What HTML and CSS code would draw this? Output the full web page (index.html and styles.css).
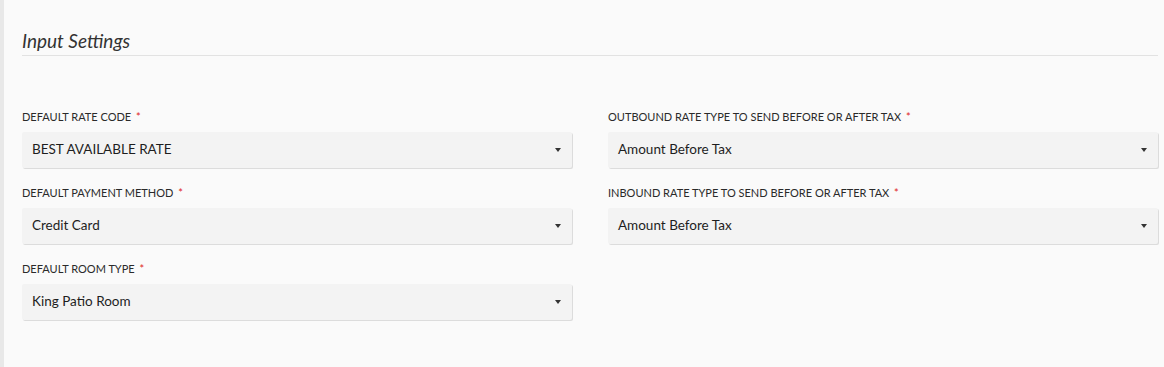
FILE: index.html
```html
<!DOCTYPE html>
<html>
<head>
<meta charset="utf-8">
<link rel="stylesheet" href="styles.css">
</head>
<body>
<div class="page">
  <div class="strip"></div>
  <main class="content">
    <h2 class="section-title">Input Settings</h2>
    <div class="form-grid">
      <div class="col">
        <div class="field">
          <label class="label">DEFAULT RATE CODE <span class="req">*</span></label>
          <div class="select"><span>BEST AVAILABLE RATE</span><i class="caret"></i></div>
        </div>
        <div class="field">
          <label class="label">DEFAULT PAYMENT METHOD <span class="req">*</span></label>
          <div class="select"><span>Credit Card</span><i class="caret"></i></div>
        </div>
        <div class="field">
          <label class="label">DEFAULT ROOM TYPE <span class="req">*</span></label>
          <div class="select"><span>King Patio Room</span><i class="caret"></i></div>
        </div>
      </div>
      <div class="col">
        <div class="field">
          <label class="label">OUTBOUND RATE TYPE TO SEND BEFORE OR AFTER TAX <span class="req">*</span></label>
          <div class="select"><span>Amount Before Tax</span><i class="caret"></i></div>
        </div>
        <div class="field">
          <label class="label">INBOUND RATE TYPE TO SEND BEFORE OR AFTER TAX <span class="req">*</span></label>
          <div class="select"><span>Amount Before Tax</span><i class="caret"></i></div>
        </div>
      </div>
    </div>
  </main>
</div>
</body>
</html>
```
FILE: styles.css
```css
* { box-sizing: border-box; }
html, body { margin: 0; padding: 0; }
body {
  background: #fafafa;
  font-family: Lato, "Noto Sans", sans-serif;
  color: #222;
  width: 1164px;
  height: 367px;
  overflow: hidden;
}
.page { display: flex; height: 367px; }
.strip {
  width: 4px;
  flex: none;
  background-color: #efefef;
  background-image: radial-gradient(#e0e0e0 0.6px, transparent 0.8px);
  background-size: 2px 2px;
}
.content { flex: 1; padding: 28px 6px 0 18px; }
.section-title {
  margin: 0;
  font-size: 19px;
  font-weight: 400;
  font-style: italic;
  line-height: 26px;
  color: #333;
  padding-bottom: 1px;
  border-bottom: 1px solid #e2e2e2;
}
.form-grid {
  display: grid;
  grid-template-columns: 550px 550px;
  column-gap: 36px;
  margin-top: 52px;
}
.col { display: flex; flex-direction: column; gap: 16px; }
.field { display: flex; flex-direction: column; gap: 8px; }
.label {
  font-size: 11px;
  line-height: 16px;
  color: #2a2a2a;
  padding-top: 1px;
  margin-bottom: -1px;
}
.req { color: #e02424; margin-left: 2px; }
.select {
  height: 36px;
  background: #f3f3f3;
  border-radius: 2px;
  box-shadow: 1px 1px 0 #dcdcdc;
  display: flex;
  align-items: center;
  justify-content: space-between;
  padding: 0 11px 2px 10px;
  font-size: 13.5px;
  color: #1e1e1e;
}
.caret {
  width: 0; height: 0;
  border-left: 3px solid transparent;
  border-right: 3px solid transparent;
  border-top: 4px solid #333;
  margin-top: 2px;
}
```
